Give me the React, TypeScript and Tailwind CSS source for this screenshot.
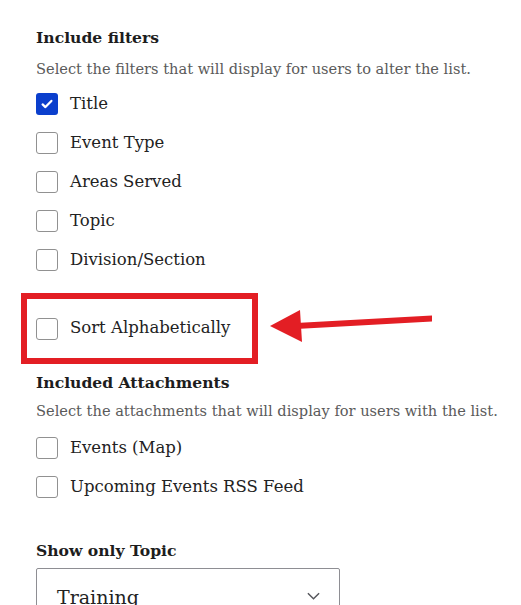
import React from "react";

const Box = ({ checked }: { checked?: boolean }) =>
    checked ? (
        <span className="flex h-[22px] w-[22px] shrink-0 items-center justify-center rounded-[3px] bg-[#0b3fcd]">
            <svg viewBox="0 0 16 16" className="h-[14px] w-[14px]">
                <path d="M3 8.5l3.2 3L13 4.5" fill="none" stroke="#fff" strokeWidth="2.6" strokeLinecap="round" strokeLinejoin="round" />
            </svg>
        </span>
    ) : (
        <span className="h-[22px] w-[22px] shrink-0 rounded-[3px] border border-[#919191] bg-white" />
    );

const Row = ({ label, checked }: { label: string; checked?: boolean }) => (
    <div className="flex h-[39px] items-center gap-3">
        <Box checked={checked} />
        <span className="text-[16.5px] text-[#222]">{label}</span>
    </div>
);

const App = () => {
    return (
        <div
            className="relative h-[605px] w-[521px] overflow-hidden bg-white pl-9 pt-[26px]"
            style={{ fontFamily: '"DejaVu Serif", serif' }}
        >
            {/* include filters */}
            <h2 className="text-[15.6px] font-bold leading-6 text-[#1d1d1d]">Include filters</h2>
            <p className="mt-2 text-[14.6px] leading-[22px] text-[#5a5a5a]">
                Select the filters that will display for users to alter the list.
            </p>
            <div className="mt-[4.5px]">
                <Row label="Title" checked />
                <Row label="Event Type" />
                <Row label="Areas Served" />
                <Row label="Topic" />
                <Row label="Division/Section" />
            </div>

            {/* highlighted option */}
            <div className="-ml-[15px] mt-[13.5px] flex h-[71px] w-[237px] items-center border-[6px] border-[#e31e24] pl-[9px]">
                <div className="flex items-center gap-3">
                    <Box />
                    <span className="text-[16.5px] text-[#222]">Sort Alphabetically</span>
                </div>
            </div>

            {/* attachments */}
            <h2 className="mt-[7px] text-[15.6px] font-bold leading-6 text-[#1d1d1d]">Included Attachments</h2>
            <p className="mt-[5px] text-[14.6px] leading-[22px] text-[#5a5a5a]">
                Select the attachments that will display for users with the list.
            </p>
            <div className="mt-[6.5px]">
                <Row label="Events (Map)" />
                <Row label="Upcoming Events RSS Feed" />
            </div>

            {/* topic select */}
            <h2 className="mt-[32.5px] text-[15.6px] font-bold leading-6 text-[#1d1d1d]">Show only Topic</h2>
            <div className="mt-[5px] flex h-[52px] w-[304px] items-start justify-between rounded-[2px] border border-[#8e8e93] pl-5 pr-[18px] pt-[16px]">
                <span className="text-[19px] leading-6 text-[#222]">Training</span>
                <svg viewBox="0 0 16 10" className="mt-[7px] h-[8px] w-[15px]">
                    <path d="M1 1.5l7 7 7-7" fill="none" stroke="#55565b" strokeWidth="1.8" />
                </svg>
            </div>

            {/* annotation arrow */}
            <svg className="absolute left-[266px] top-[305px]" width="170" height="42" viewBox="0 0 170 42">
                <path d="M30 18L166 10.5l0 6L30 24z" fill="#e31e24" />
                <path d="M4 21L34 5l2 32z" fill="#e31e24" />
            </svg>
        </div>
    );
};

export default App;
